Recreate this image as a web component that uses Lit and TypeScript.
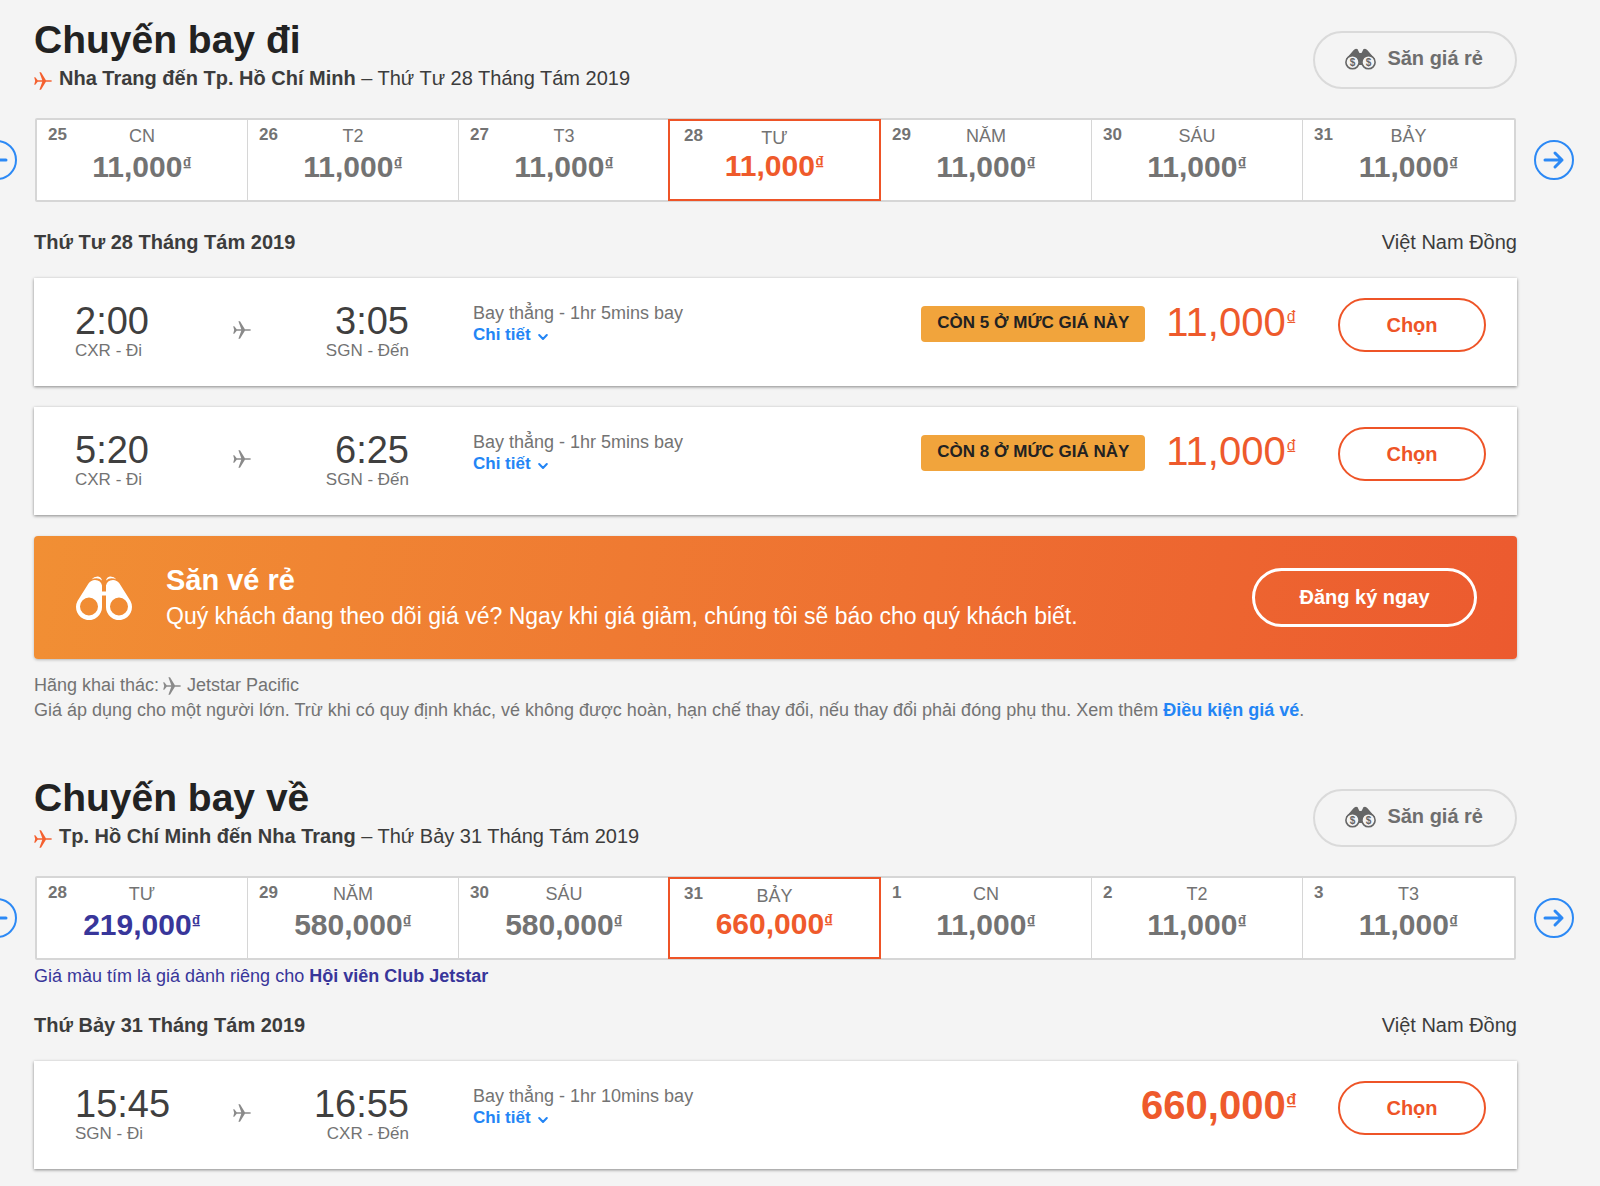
import { LitElement, html, css, svg, nothing } from "lit";
import { customElement, property } from "lit/decorators.js";

interface Day { date: string; name: string; fare: string; selected?: boolean; member?: boolean; }
interface Flight { dep: string; from: string; arr: string; to: string; duration: string; badge?: string; fare: string; bold?: boolean; }
interface Leg { title: string; route: string; date: string; days: Day[]; flights: Flight[]; }

const base = css`
  :host { display: block; }
  * { box-sizing: border-box; }
  h1, h2, h3, p { margin: 0; }
  button { font: inherit; cursor: pointer; margin: 0; background: none; }
  svg { display: block; flex: none; }
  .cur { vertical-align: top; font-weight: inherit; }
`;

const plane = (size: number) => html`<svg width=${size} height=${size} viewBox="0 0 18 18" fill="currentColor" aria-hidden="true">
  ${svg`<path d="M0.200 5.300H1.300L3.700 8.200H8.300L5.400 0.300H7L11.900 8.200H16.500Q18 8.300 18 9Q18 9.700 16.500 9.800H11.900L7 17.700H5.400L8.300 9.800H3.700L1.300 12.700H0.200L1.200 9Z"/>`}</svg>`;

const arrow = (left: boolean) => html`<svg width="24" height="24" viewBox="0 0 24 24" fill="none" stroke="currentColor" stroke-width="3" stroke-linecap="round" stroke-linejoin="round" aria-hidden="true">
  ${left ? svg`<path d="M21 12H4M11 5L4 12L11 19"/>` : svg`<path d="M3 12H20M13 5L20 12L13 19"/>`}</svg>`;

@customElement("date-strip")
class DateStrip extends LitElement {
  @property({ attribute: false }) days: Day[] = [];
  static styles = [base, css`
    .strip { display: grid; grid-template-columns: 40px minmax(0, 1fr) 40px; gap: 18px; align-items: center; margin: 0 26px 0 -23px; }
    .round { width: 40px; height: 40px; border: 2px solid #2c89f5; border-radius: 50%; color: #2c89f5; padding: 0; display: grid; place-items: center; }
    .days { display: grid; grid-template-columns: repeat(7, minmax(0, 1fr)); border: 2px solid #d6d6d6; border-radius: 2px; background: #fff; }
    .day { position: relative; min-height: 80px; border: 0; border-right: 1px solid #d6d6d6; padding: 6px 0 16px; text-align: center; color: #737373; font-size: 18px; line-height: 20px; }
    .day:last-child { border-right: 0; }
    .num { position: absolute; left: 11px; top: 6px; font-weight: 700; font-size: 17px; line-height: 18px; }
    .name { display: block; }
    .fare { display: block; font-size: 30px; line-height: 34px; margin-top: 4px; font-weight: 700; }
    .cur { font-size: 18px; line-height: 28px; }
    .member .fare { color: #38369a; }
    .selected { border: 2px solid #ee5427; margin: -1px 0 -1px -2px; }
    .selected:last-child { border-right: 2px solid #ee5427; }
    .selected .num { left: 14px; }
    .selected .fare { color: #ef5a2b; margin-top: 1px; }
  `];
  render() {
    return html`<div class="strip">
      <button class="round" aria-label="Trước">${arrow(true)}</button>
      <div class="days">${this.days.map((d) => html`<button class="day ${d.selected ? "selected" : ""} ${d.member ? "member" : ""}">
        <span class="num">${d.date}</span><span class="name">${d.name}</span>
        <span class="fare">${d.fare}<span class="cur">₫</span></span></button>`)}</div>
      <button class="round" aria-label="Sau">${arrow(false)}</button>
    </div>`;
  }
}

@customElement("flight-card")
class FlightCard extends LitElement {
  @property({ attribute: false }) flight!: Flight;
  static styles = [base, css`
    .card { display: flex; align-items: flex-start; min-height: 108px; background: #fff; padding: 20px 31px 20px 41px; box-shadow: 0 1px 3px rgba(0, 0, 0, .45); color: #737373; font-size: 18px; line-height: 21px; }
    .times { display: grid; grid-template-columns: 1fr auto 1fr; width: 334px; padding-top: 4px; font-size: 17px; line-height: 19px; }
    .end { text-align: right; }
    .time { font-size: 38px; line-height: 39px; color: #3f3f3f; }
    .plane { padding-top: 19px; color: #8a8a8a; }
    .info { margin-left: 64px; padding-top: 5px; flex: 1; }
    .more { display: inline-flex; align-items: center; gap: 7px; color: #2385f5; font-weight: 700; font-size: 17px; text-decoration: none; }
    .more svg { margin-top: 4px; }
    .badge { background: #f1a43c; color: #222; font-weight: 700; font-size: 17px; line-height: 34px; height: 36px; padding: 0 16px; border-radius: 4px; margin-top: 8px; }
    .fare { font-size: 40px; line-height: 46px; color: #ee5a2c; margin: 1px 41px 0 21px; }
    .bold { font-weight: 700; }
    .cur { font-size: 22px; line-height: 40px; }
    .pick { width: 148px; height: 54px; border: 2px solid #ee5427; border-radius: 27px; color: #ee5427; font-size: 20px; font-weight: 700; }
  `];
  render() {
    const f = this.flight;
    return html`<article class="card">
      <div class="times">
        <div><div class="time">${f.dep}</div>${f.from} - Đi</div>
        <div class="plane">${plane(18)}</div>
        <div class="end"><div class="time">${f.arr}</div>${f.to} - Đến</div>
      </div>
      <div class="info"><div>Bay thẳng - ${f.duration} bay</div>
        <a class="more" href="#">Chi tiết <svg width="10" height="8" viewBox="0 0 10 8" fill="none" stroke="currentColor" stroke-width="2" stroke-linecap="round" stroke-linejoin="round" aria-hidden="true"><path d="M1.2 2L5 6L8.8 2"/></svg></a></div>
      ${f.badge ? html`<div class="badge">${f.badge}</div>` : nothing}
      <div class="fare ${f.bold ? "bold" : ""}">${f.fare}<span class="cur">₫</span></div>
      <button class="pick">Chọn</button>
    </article>`;
  }
}

@customElement("leg-header")
class LegHeader extends LitElement {
  @property({ attribute: false }) leg!: Leg;
  static styles = [base, css`
    .head { display: flex; justify-content: space-between; align-items: flex-start; }
    .title { font-size: 39px; line-height: 45px; color: #222; }
    .sub { display: flex; align-items: center; gap: 7px; margin-top: 4px; font-size: 20px; line-height: 24px; color: #3c3c3c; }
    .sub svg { margin-top: 6px; color: #f4602f; }
    .hunt { display: flex; align-items: center; gap: 11px; height: 58px; margin-top: 14px; padding: 0 32px 3px 30px; border: 2px solid #dadada; border-radius: 29px; color: #6e6e6e; font-size: 20px; font-weight: 700; }
    .coin { font: 700 10px "Liberation Sans", Arial, sans-serif; }
  `];
  render() {
    return html`<header class="head">
      <div><h1 class="title">${this.leg.title}</h1>
        <div class="sub">${plane(18)}<span><b>${this.leg.route}</b> – ${this.leg.date}</span></div></div>
      <button class="hunt"><svg width="31" height="22" viewBox="0 0 31 22" aria-hidden="true">
        <path d="M1 11L8.500 2.200Q10.500 -.3 12.700 1.200Q13.500 3.500 14.500 5H16.500Q17.500 3.500 18.300 1.200Q20.500 -.3 22.500 2.200L30 11L24 17H7Z" fill="#666"/>
        <circle cx="7.500" cy="14.200" r="6.600" fill="#f4f4f4" stroke="#666" stroke-width="1.600"/>
        <circle cx="23.500" cy="14.200" r="6.600" fill="#f4f4f4" stroke="#666" stroke-width="1.600"/>
        <text class="coin" x="7.500" y="17.800" text-anchor="middle" fill="#666">$</text>
        <text class="coin" x="23.500" y="17.800" text-anchor="middle" fill="#666">$</text></svg>Săn giá rẻ</button>
    </header>`;
  }
}

@customElement("app-root")
class AppRoot extends LitElement {
  static styles = [base, css`
    :host { font-family: "Liberation Sans", Arial, sans-serif; background: #f4f4f4; min-height: 100vh; overflow: hidden; }
    .page { padding: 17px 83px 17px 34px; }
    .leg + .leg { margin-top: 52px; }
    .strip { margin: 28px -83px 0 -34px; }
    .bar { display: flex; justify-content: space-between; margin-top: 28px; font-size: 20px; line-height: 24px; color: #3c3c3c; }
    .bar h2 { font-size: 20px; }
    .note + .bar { margin-top: 27px; }
    .cards { display: grid; gap: 21px; margin-top: 24px; }
    .promo { display: flex; align-items: center; min-height: 123px; margin-top: 21px; padding: 0 40px 0 42px; border-radius: 4px; background: linear-gradient(100deg, #f18f34, #ec5a2f); box-shadow: 0 1px 3px rgba(0, 0, 0, .25); color: #fff; }
    .words { flex: 1; margin-left: 34px; }
    .words h3 { font-size: 29px; line-height: 36px; }
    .words p { font-size: 23px; line-height: 36px; }
    .join { width: 225px; height: 59px; border: 3px solid #fff; border-radius: 30px; color: #fff; font-size: 20px; font-weight: 700; }
    .foot { margin-top: 14px; font-size: 18px; line-height: 25px; color: #737373; }
    .line { display: flex; align-items: center; }
    .line svg { margin: 0 6px 0 4px; color: #8a8a8a; }
    .foot a { color: #2385f5; font-weight: 700; text-decoration: none; }
    .note { margin-top: 6px; font-size: 18px; line-height: 20px; color: #38369a; }
  `];
  legs: Leg[] = [
    {
      title: "Chuyến bay đi", route: "Nha Trang đến Tp. Hồ Chí Minh", date: "Thứ Tư 28 Tháng Tám 2019",
      days: [
        { date: "25", name: "CN", fare: "11,000" }, { date: "26", name: "T2", fare: "11,000" },
        { date: "27", name: "T3", fare: "11,000" }, { date: "28", name: "TƯ", fare: "11,000", selected: true },
        { date: "29", name: "NĂM", fare: "11,000" }, { date: "30", name: "SÁU", fare: "11,000" },
        { date: "31", name: "BẢY", fare: "11,000" }],
      flights: [
        { dep: "2:00", from: "CXR", arr: "3:05", to: "SGN", duration: "1hr 5mins", badge: "CÒN 5 Ở MỨC GIÁ NÀY", fare: "11,000" },
        { dep: "5:20", from: "CXR", arr: "6:25", to: "SGN", duration: "1hr 5mins", badge: "CÒN 8 Ở MỨC GIÁ NÀY", fare: "11,000" }],
    },
    {
      title: "Chuyến bay về", route: "Tp. Hồ Chí Minh đến Nha Trang", date: "Thứ Bảy 31 Tháng Tám 2019",
      days: [
        { date: "28", name: "TƯ", fare: "219,000", member: true }, { date: "29", name: "NĂM", fare: "580,000" },
        { date: "30", name: "SÁU", fare: "580,000" }, { date: "31", name: "BẢY", fare: "660,000", selected: true },
        { date: "1", name: "CN", fare: "11,000" }, { date: "2", name: "T2", fare: "11,000" },
        { date: "3", name: "T3", fare: "11,000" }],
      flights: [{ dep: "15:45", from: "SGN", arr: "16:55", to: "CXR", duration: "1hr 10mins", fare: "660,000", bold: true }],
    },
  ];
  leg(l: Leg) {
    const member = l.days.some((d) => d.member);
    return html`<section class="leg">
      <leg-header .leg=${l}></leg-header>
      <date-strip class="strip" .days=${l.days}></date-strip>
      ${member ? html`<p class="note">Giá màu tím là giá dành riêng cho <b>Hội viên Club Jetstar</b></p>` : nothing}
      <div class="bar"><h2>${l.date}</h2><span>Việt Nam Đồng</span></div>
      <div class="cards">${l.flights.map((f) => html`<flight-card .flight=${f}></flight-card>`)}</div>
      ${member ? nothing : this.promo()}
    </section>`;
  }
  promo() {
    return html`<div class="promo">
        <svg width="56" height="44" viewBox="0 0 56 44" fill="#fff" aria-hidden="true">
          <path d="M15.500 3.400Q18 .2 22 .4Q25.300 .8 26 4.600Q23.500 2.300 20.500 2.300Q17.800 2.300 15.500 3.400ZM40.500 3.400Q38 .2 34 .4Q30.700 .8 30 4.600Q32.500 2.300 35.500 2.300Q38.200 2.300 40.500 3.400Z"/>
          <path fill-rule="evenodd" d="M1.500 25L12.500 7.500Q15 4 19 4Q25 4.200 26 9.500V15.500H30V9.500Q31 4.200 37 4Q41 4 43.500 7.500L54.500 25A13 13 0 1 1 30 30.500V19.500H26V30.500A13 13 0 1 1 1.500 25ZM13 21.500A9 9 0 1 0 13 39.500A9 9 0 1 0 13 21.500ZM43 21.500A9 9 0 1 0 43 39.500A9 9 0 1 0 43 21.500Z"/></svg>
        <div class="words"><h3>Săn vé rẻ</h3>
          <p>Quý khách đang theo dõi giá vé? Ngay khi giá giảm, chúng tôi sẽ báo cho quý khách biết.</p></div>
        <button class="join">Đăng ký ngay</button>
      </div>
      <div class="foot"><div class="line">Hãng khai thác: ${plane(18)} Jetstar Pacific</div>
        <p>Giá áp dụng cho một người lớn. Trừ khi có quy định khác, vé không được hoàn, hạn chế thay đổi, nếu thay đổi phải đóng phụ thu. Xem thêm <a href="#">Điều kiện giá vé</a>.</p></div>`;
  }
  render() { return html`<main class="page">${this.legs.map((l) => this.leg(l))}</main>`; }
}
